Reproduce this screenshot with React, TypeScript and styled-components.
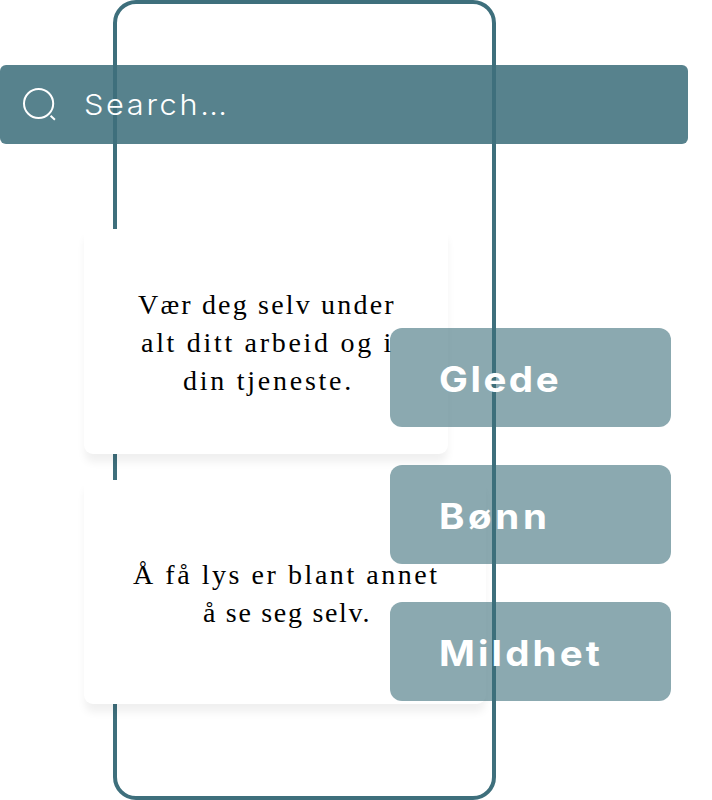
import React from "react";
import styled, { createGlobalStyle } from "styled-components";

const GlobalStyle = createGlobalStyle`
  *, *::before, *::after { box-sizing: border-box; }
  body { margin: 0; background: #fff; overflow: hidden; }
`;

/* Every layer shares the single grid cell, so later layers sit on top. */
const Stage = styled.main`
  display: grid;
  grid-template: 800px / 712px;
  overflow: hidden;
  background: #fff;

  & > * { grid-area: 1 / 1; }
`;

const PhoneFrame = styled.div`
  width: 383px;
  height: 800px;
  margin-left: 113px;
  border: 4px solid #3e6f7c;
  border-radius: 23px;
`;

const CardColumn = styled.section`
  display: flex;
  flex-direction: column;
  align-items: flex-start;
  gap: 26px;
  padding: 229px 0 0 84px;
`;

const QuoteCard = styled.article<{ $width: number; $height: number; $top: number; $shift: number }>`
  width: ${(p) => p.$width}px;
  height: ${(p) => p.$height}px;
  padding: ${(p) => p.$top}px 0 0 ${(p) => p.$shift}px;
  display: flex;
  flex-direction: column;
  align-items: flex-start;
  border-radius: 0 0 9px 9px;
  background: #fff;
  box-shadow: 0 9px 8px -1px rgba(0, 0, 0, 0.062);
`;

const QuoteLine = styled.span<{ $indent: number; $spacing: number }>`
  margin-left: ${(p) => p.$indent}px;
  font: 400 28px/38px "Liberation Serif", serif;
  letter-spacing: ${(p) => p.$spacing}px;
  color: #000;
  white-space: pre;
`;

const SearchBar = styled.div`
  display: flex;
  align-items: center;
  width: 687.6px;
  height: 78.6px;
  margin-top: 65px;
  padding-left: 22px;
  gap: 27px;
  border-radius: 6px;
  background: rgba(62, 111, 124, 0.87);
`;

const SearchIcon = styled.svg`
  width: 35px;
  height: 36px;
  flex: none;
`;

const SearchText = styled.span`
  padding-top: 2px;
  font: 300 29px/36px Inter, sans-serif;
  letter-spacing: 2.5px;
  color: #fff;
  transform: scaleX(1.06);
  transform-origin: left;
`;

const Ellipsis = styled.span`
  letter-spacing: 0.3px;
`;

const TagColumn = styled.section`
  display: flex;
  flex-direction: column;
  gap: 38.3px;
  padding: 328.2px 0 0 390px;
`;

const Tag = styled.div`
  display: flex;
  align-items: center;
  width: 281px;
  height: 98.7px;
  padding: 2px 0 0 49px;
  border-radius: 12px;
  background: rgba(62, 111, 124, 0.6);
`;

const TagText = styled.span<{ $spacing: number }>`
  font: 700 35px/40px Inter, sans-serif;
  letter-spacing: ${(p) => p.$spacing}px;
  color: #fff;
  transform: scaleX(1.1);
  transform-origin: left;
`;

const quotes = [
  {
    width: 364, height: 224.5, top: 57, shift: 54,
    lines: [
      { text: "Vær deg selv under", indent: 0, spacing: 2.18 },
      { text: "alt ditt arbeid og i", indent: 3, spacing: 2.7 },
      { text: "din tjeneste.", indent: 45, spacing: 2.75 },
    ],
  },
  {
    width: 402, height: 224, top: 76, shift: 49,
    lines: [
      { text: "Å få lys er blant annet", indent: 0, spacing: 2.55 },
      { text: "å se seg selv.", indent: 70, spacing: 1.7 },
    ],
  },
];

const tags = [
  { label: "Glede", spacing: 2.3 },
  { label: "Bønn", spacing: 3.3 },
  { label: "Mildhet", spacing: 2.85 },
];

export default function App() {
  return (
    <>
      <GlobalStyle />
      <Stage>
        <PhoneFrame />
        <CardColumn>
          {quotes.map((q) => (
            <QuoteCard key={q.width} $width={q.width} $height={q.height} $top={q.top} $shift={q.shift}>
              {q.lines.map((l) => (
                <QuoteLine key={l.text} $indent={l.indent} $spacing={l.spacing}>{l.text}</QuoteLine>
              ))}
            </QuoteCard>
          ))}
        </CardColumn>
        <SearchBar>
          <SearchIcon viewBox="0 0 35 36" fill="none" stroke="#fff" strokeWidth="2">
            <circle cx="16.6" cy="17.5" r="14.6" />
            <path d="M28.6 29.8L32.9 33.8" />
          </SearchIcon>
          <SearchText>Search<Ellipsis>...</Ellipsis></SearchText>
        </SearchBar>
        <TagColumn>
          {tags.map((t) => (
            <Tag key={t.label}>
              <TagText $spacing={t.spacing}>{t.label}</TagText>
            </Tag>
          ))}
        </TagColumn>
      </Stage>
    </>
  );
}
